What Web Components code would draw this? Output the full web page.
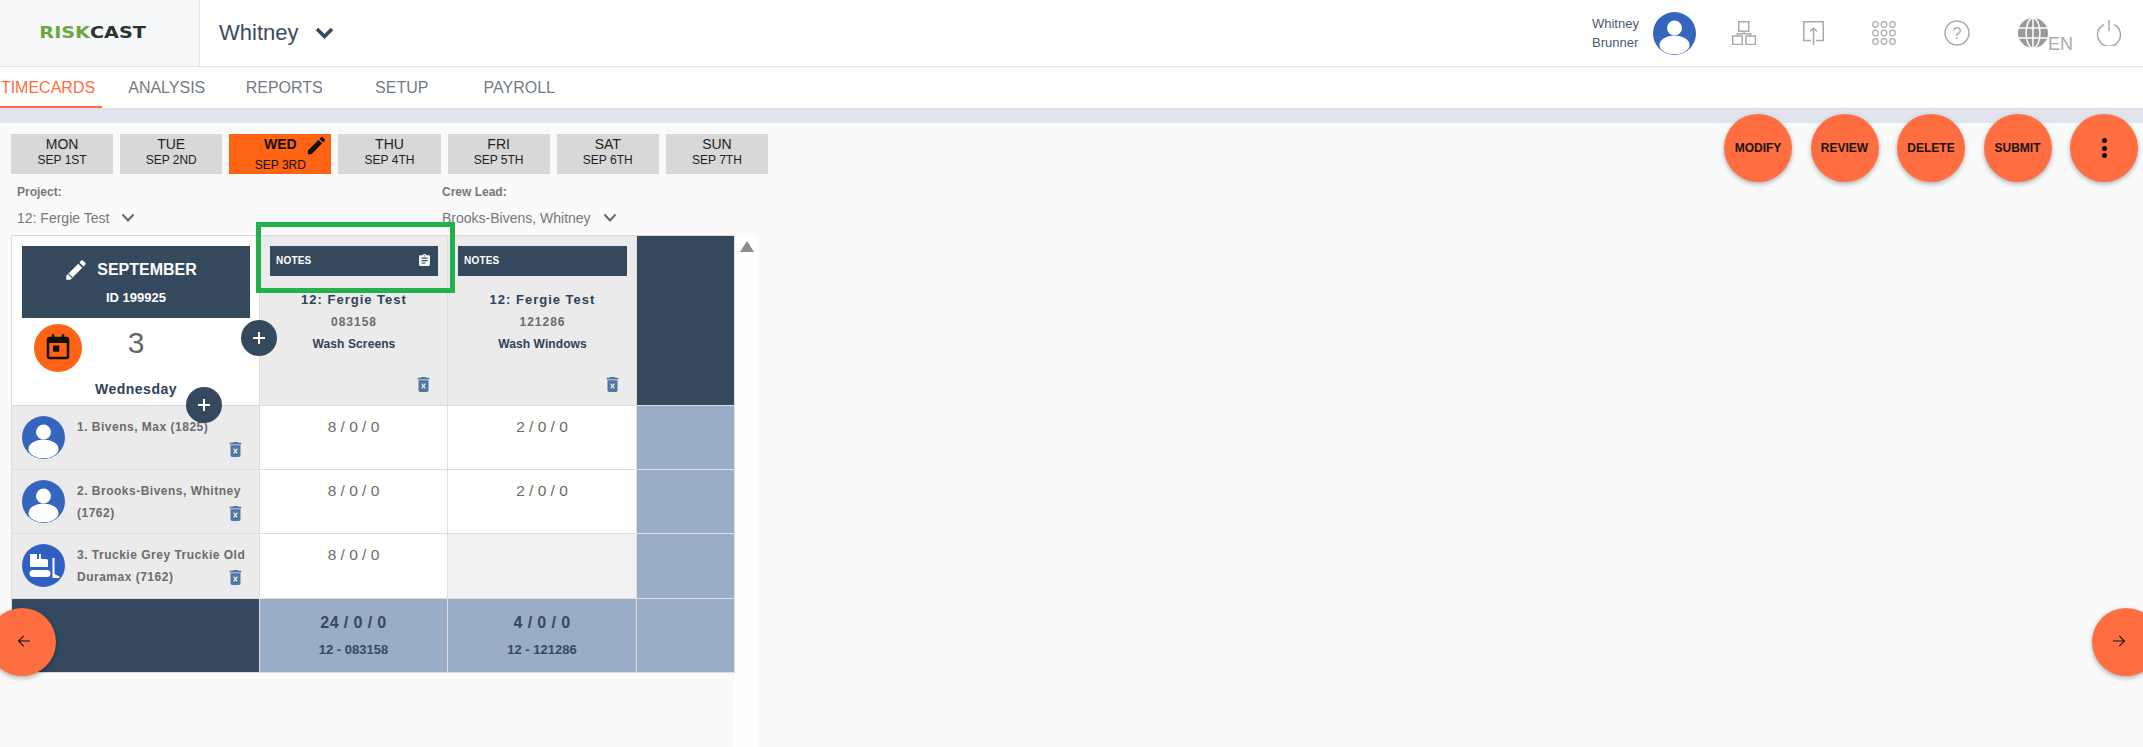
<!DOCTYPE html>
<html lang="en">
<head>
<meta charset="utf-8">
<title>Riskcast Timecards</title>
<style>
  html, body { margin: 0; height: 100%; }
  body {
    display: flex;
    flex-direction: column;
    height: 747px;
    overflow: hidden;
    background: #fafafa;
    font-family: "Liberation Sans", Arial, sans-serif;
  }
</style>
</head>
<body>
<rc-header name="Whitney"></rc-header>
<rc-tabs></rc-tabs>
<rc-main>
  <rc-days></rc-days>
  <rc-filters></rc-filters>
  <rc-timecard>
    <rc-corner></rc-corner>
    <rc-job project="12: Fergie Test" code="083158" task="Wash Screens" clip></rc-job>
    <rc-job project="12: Fergie Test" code="121286" task="Wash Windows"></rc-job>
    <rc-cell kind="dark"></rc-cell>

    <rc-person>1. Bivens, Max (1825)</rc-person>
    <rc-cell>8 / 0 / 0</rc-cell>
    <rc-cell>2 / 0 / 0</rc-cell>
    <rc-cell kind="blue"></rc-cell>

    <rc-person>2. Brooks-Bivens, Whitney (1762)</rc-person>
    <rc-cell>8 / 0 / 0</rc-cell>
    <rc-cell>2 / 0 / 0</rc-cell>
    <rc-cell kind="blue"></rc-cell>

    <rc-person truck>3. Truckie Grey Truckie Old Duramax (7162)</rc-person>
    <rc-cell>8 / 0 / 0</rc-cell>
    <rc-cell kind="empty"></rc-cell>
    <rc-cell kind="blue"></rc-cell>

    <rc-cell kind="dark"></rc-cell>
    <rc-total sub="12 - 083158">24 / 0 / 0</rc-total>
    <rc-total sub="12 - 121286">4 / 0 / 0</rc-total>
    <rc-cell kind="blue"></rc-cell>
  </rc-timecard>
</rc-main>

<script>
const TRASH = `<svg width="13" height="15" viewBox="5 3 14 18" fill="#4f77a3"><path d="M6 19c0 1.1.9 2 2 2h8c1.1 0 2-.9 2-2V7H6v12zm3.2-7.6l1-1L12 12.6l1.8-2.200 1 1L13 14l1.800 2.200-1 1L12 15.400l-1.800 1.800-1-1L11 14zM15.500 4l-1-1h-5l-1 1H5v2h14V4z"/></svg>`;
const CHEVRON = `<svg width="14" height="10" viewBox="0 0 14 10" fill="none" stroke="#666" stroke-width="2"><path d="M1.500 1.500 7 7.500l5.500-6"/></svg>`;
const PERSON = `<svg width="43" height="43" viewBox="0 0 43 43"><defs><clipPath id="c"><circle cx="21.500" cy="21.500" r="21"/></clipPath></defs><circle cx="21.500" cy="21.500" r="21.500" fill="#3565bd"/><circle cx="21.500" cy="16" r="7.500" fill="#fff"/><ellipse cx="21.500" cy="33" rx="15" ry="9.500" fill="#fff" clip-path="url(#c)"/></svg>`;
const PENCIL = `<path d="M3 17.250V21h3.750L17.810 9.940l-3.750-3.750L3 17.250zM20.710 7.040c.39-.39.39-1.020 0-1.410l-2.340-2.340c-.39-.39-1.020-.39-1.410 0l-1.830 1.830 3.750 3.750 1.830-1.830z"/>`;

class RcHeader extends HTMLElement {
  connectedCallback() {
    const name = this.getAttribute('name');
    this.attachShadow({ mode: 'open' }).innerHTML = `
      <style>
        :host { display: flex; align-items: stretch; height: 66px; background: #fff; border-bottom: 1px solid #e4e4e4; font-family: "Liberation Sans", sans-serif; flex: none; }
        .logo { width: 200px; background: #f7f8fa; border-right: 1px solid #e4e6ea; display: flex; align-items: center; justify-content: center; box-sizing: border-box; padding-right: 13px; }
        .logo span { font: bold 15px "DejaVu Sans", sans-serif; transform: scaleX(1.28); color: #28352c; }
        .logo b { color: #6aa83e; }
        .who { display: flex; align-items: center; gap: 17px; margin-left: 19px; font-size: 22px; color: #3a4b60; }
        .tools { margin-left: auto; display: flex; align-items: center; padding-right: 21px; }
        .user { width: 50px; font-size: 13px; line-height: 19px; color: #4a5a70; margin-right: 11px; }
        .tools svg { display: block; fill: none; stroke: #aaa; stroke-width: 1.500; }
        .av svg { stroke: none; fill: initial; }
        .en { font-size: 18px; color: #aaa; align-self: flex-end; margin-bottom: 13px; line-height: 18px; margin-right: 23px; }
      </style>
      <div class="logo"><span><b>RISK</b>CAST</span></div>
      <div class="who">${name}
        <svg width="19" height="12" viewBox="0 0 19 12" fill="none" stroke="#34495e" stroke-width="3.500"><path d="M2 2l7.500 7.500L17 2"/></svg>
      </div>
      <div class="tools">
        <div class="user">Whitney Brunner</div>
        <div class="av" style="margin-right:36px">${PERSON}</div>
        <svg style="margin-right:47px" width="24" height="24" viewBox="0 0 24 24"><rect x="6.750" y=".75" width="10" height="9.500"/><rect x=".75" y="15" width="9.500" height="8.500"/><rect x="14" y="15" width="9.500" height="8.500"/><path d="M12 10.500V12.800M5.500 15v-2.200h13V15"/></svg>
        <svg style="margin-right:48px" width="21" height="24" viewBox="0 0 21 24"><path d="M8 19.500H.75V.75h19.500V19.500H13M10.500 24V7M7 10.500 10.500 7 14 10.500"/></svg>
        <svg style="margin-right:48px;stroke-width:1.200" width="24" height="24" viewBox="0 0 24 24"><circle cx="3.500" cy="3.500" r="2.800"/><circle cx="12" cy="3.500" r="2.800"/><circle cx="20.500" cy="3.500" r="2.800"/><circle cx="3.500" cy="12" r="2.800"/><circle cx="12" cy="12" r="2.800"/><circle cx="20.500" cy="12" r="2.800"/><circle cx="3.500" cy="20.500" r="2.800"/><circle cx="12" cy="20.500" r="2.800"/><circle cx="20.500" cy="20.500" r="2.800"/></svg>
        <svg style="margin-right:48px" width="26" height="26" viewBox="0 0 26 26"><circle cx="13" cy="13" r="12"/><text x="13" y="18.500" text-anchor="middle" font-size="16" font-family="Liberation Sans" fill="#aaa" stroke="none">?</text></svg>
        <svg width="30" height="30" viewBox="0 0 30 30"><circle cx="15" cy="15" r="15" style="fill:#999;stroke:none"/><g style="stroke:#fff;stroke-width:1.500"><ellipse cx="15" cy="15" rx="7" ry="15"/><path d="M15 0v30M0 10h30M0 20h30"/></g></svg>
        <span class="en">EN</span>
        <svg width="26" height="26" viewBox="0 0 26 26"><path d="M8 4.500A11.500 11.500 0 1 0 18 4.500M13 0v11"/></svg>
      </div>`;
  }
}

class RcTabs extends HTMLElement {
  connectedCallback() {
    const names = ['ANALYSIS', 'REPORTS', 'SETUP', 'PAYROLL'];
    this.attachShadow({ mode: 'open' }).innerHTML = `
      <style>
        :host { display: flex; height: 41px; background: #fff; border-bottom: 1px solid #dcdcdc; font: 16px "Liberation Sans", sans-serif; color: #757b85; flex: none; }
        div { display: flex; align-items: center; justify-content: center; width: 117.500px; box-sizing: border-box; }
        .on { width: 102px; margin-right: 6px; padding-right: 6px; color: #ff6e40; border-bottom: 2px solid #ff6e40; padding-top: 2px; }
      </style>
      <div class="on">TIMECARDS</div>
      ${names.map(n => `<div>${n}</div>`).join('')}`;
  }
}

class RcMain extends HTMLElement {
  connectedCallback() {
    const fabs = ['MODIFY', 'REVIEW', 'DELETE', 'SUBMIT'];
    this.attachShadow({ mode: 'open' }).innerHTML = `
      <style>
        :host { display: flex; flex-direction: column; flex: 1; min-height: 0; position: relative; border-top: 14px solid #e1e4ec; padding: 11px 0 0 11px; }
        .actions { position: absolute; top: -9px; right: 5px; display: flex; gap: 18.500px; }
        .fab { width: 68px; height: 68px; border-radius: 50%; background: #ff6e40; box-shadow: 0 2px 5px rgba(0,0,0,.3); display: flex; align-items: center; justify-content: center; font: bold 12px "Liberation Sans", sans-serif; color: #1c1410; }
        .nav { position: absolute; top: 485px; }
        .dots { flex-direction: column; gap: 2.500px; }
        .dots i { width: 5px; height: 5px; background: #111; border-radius: 50%; }
        .back { left: -12px; }
        .next { right: -17px; }
        .back svg { margin-left: 4px; margin-bottom: 2px; }
        .next svg { margin-right: 14px; margin-bottom: 2px; }
      </style>
      <slot></slot>
      <div class="actions">
        ${fabs.map(f => `<div class="fab">${f}</div>`).join('')}
        <div class="fab dots"><i></i><i></i><i></i></div>
      </div>
      <div class="fab nav back"><svg width="18" height="18" viewBox="0 0 24 24" fill="#111"><path d="M20 11.300H6.500l5.600-5.600-1-1L3.800 12l7.300 7.300 1-1-5.600-5.600H20z"/></svg></div>
      <div class="fab nav next"><svg width="18" height="18" viewBox="0 0 24 24" fill="#111"><path d="M4 11.300h13.500l-5.600-5.600 1-1 7.300 7.300-7.300 7.300-1-1 5.600-5.600H4z"/></svg></div>`;
  }
}

class RcDays extends HTMLElement {
  connectedCallback() {
    const days = [['MON', 'SEP 1ST'], ['TUE', 'SEP 2ND'], ['WED', 'SEP 3RD'], ['THU', 'SEP 4TH'], ['FRI', 'SEP 5TH'], ['SAT', 'SEP 6TH'], ['SUN', 'SEP 7TH']];
    this.attachShadow({ mode: 'open' }).innerHTML = `
      <style>
        :host { display: grid; grid-template-columns: repeat(7, 1fr); gap: 7px; width: 757px; flex: none; font-family: "Liberation Sans", sans-serif; color: #222; }
        .day { height: 40px; background: #d8d8d8; display: flex; flex-direction: column; align-items: center; box-sizing: border-box; padding-top: 1px; position: relative; }
        .n { font-size: 14px; line-height: 18px; }
        .d { font-size: 12px; line-height: 14px; }
        .on { background: #ff6314; color: #111; }
        .on .n { font-weight: bold; }
        .on .d { margin-top: 5px; }
        .on svg { position: absolute; left: 76px; top: 0; }
      </style>
      ${days.map(([n, d]) => `<div class="day ${n === 'WED' ? 'on' : ''}"><span class="n">${n}</span><span class="d">${d}</span>${n === 'WED' ? `<svg width="23" height="23" viewBox="0 0 24 24" fill="#111">${PENCIL}</svg>` : ''}</div>`).join('')}`;
  }
}

class RcFilters extends HTMLElement {
  connectedCallback() {
    const item = (label, value) => `<div class="f"><label>${label}</label><div class="v">${value}${CHEVRON}</div></div>`;
    this.attachShadow({ mode: 'open' }).innerHTML = `
      <style>
        :host { display: flex; height: 61px; flex: none; padding-left: 6px; font-family: "Liberation Sans", sans-serif; color: #777; }
        .f { width: 425px; padding-top: 10px; box-sizing: border-box; }
        label { display: block; font-size: 12px; font-weight: bold; line-height: 16px; }
        .v { display: flex; align-items: center; gap: 12px; font-size: 14px; line-height: 18px; margin-top: 9px; }
      </style>
      ${item('Project:', '12: Fergie Test')}${item('Crew Lead:', 'Brooks-Bivens, Whitney')}`;
  }
}

class RcTimecard extends HTMLElement {
  connectedCallback() {
    const plus = `<svg width="14" height="14" viewBox="0 0 14 14" stroke="#fff" stroke-width="2"><path d="M7 1v12M1 7h12"/></svg>`;
    this.attachShadow({ mode: 'open' }).innerHTML = `
      <style>
        :host { display: flex; flex: 1; position: relative; min-height: 0; }
        .grid {
          display: grid;
          grid-template-columns: 247px 187px 188px 97px;
          grid-template-rows: 169px 63px 63px 64px 73px;
          gap: 1px;
          background: #ddd;
          border: 1px solid #ddd;
          align-self: flex-start;
        }
        .track { width: 23px; background: #fefefe; position: relative; }
        .track i { position: absolute; left: 5px; top: 6px; border: 7px solid transparent; border-top: 0; border-bottom: 11px solid #8c8c8c; }
        .plus { position: absolute; width: 36px; height: 36px; border-radius: 50%; background: #34495e; display: flex; align-items: center; justify-content: center; }
        .mark { position: absolute; left: 245px; top: -13px; width: 199px; height: 71px; box-sizing: border-box; border: 5px solid #22b14c; }
      </style>
      <div class="grid"><slot></slot></div>
      <div class="track"><i></i></div>
      <div class="plus" style="left:230px;top:85px">${plus}</div>
      <div class="plus" style="left:175px;top:152px">${plus}</div>
      <div class="mark"></div>`;
  }
}

class RcCorner extends HTMLElement {
  connectedCallback() {
    this.attachShadow({ mode: 'open' }).innerHTML = `
      <style>
        :host { display: block; background: #fff; padding: 10px 9px 0 10px; font-family: "Liberation Sans", sans-serif; }
        .bar { height: 72px; background: #34495e; color: #fff; display: flex; flex-direction: column; align-items: center; font-weight: bold; }
        .t { display: flex; align-items: center; gap: 8px; font-size: 16px; height: 24px; margin-top: 12px; margin-right: 12px; }
        .id { font-size: 13px; margin-top: 9px; line-height: 14px; }
        .row { display: grid; grid-template-columns: 48px 1fr 48px; align-items: center; padding: 6px 12px 0; }
        .cal { width: 48px; height: 48px; border-radius: 50%; background: #ff6314; display: flex; align-items: center; justify-content: center; }
        .num { text-align: center; font-size: 30px; color: #666; margin-top: -10px; }
        .wd { text-align: center; font-size: 14px; font-weight: bold; color: #2f4159; letter-spacing: .5px; margin-top: 9px; }
      </style>
      <div class="bar">
        <div class="t"><svg width="26" height="26" viewBox="0 0 24 24" fill="#fff">${PENCIL}<path d="M5 15.500l3.500 3.500" stroke="#34495e"/></svg>SEPTEMBER</div>
        <div class="id">ID 199925</div>
      </div>
      <div class="row">
        <div class="cal"><svg width="30" height="30" viewBox="0 0 24 24" fill="#111"><path d="M17 3V1h-2v2H9V1H7v2H5C3.900 3 3 3.900 3 5v14c0 1.100.9 2 2 2h14c1.100 0 2-.9 2-2V5c0-1.100-.9-2-2-2zM19 19H5V8h14zM8 10h5v5H8z"/></svg></div>
        <div class="num">3</div>
      </div>
      <div class="wd">Wednesday</div>`;
  }
}

class RcJob extends HTMLElement {
  connectedCallback() {
    const clip = this.hasAttribute('clip') ? `<svg width="11" height="12" viewBox="3 1 18 20" fill="#fff"><path d="M19 3h-4.180C14.400 1.840 13.300 1 12 1s-2.400.84-2.820 2H5c-1.100 0-2 .9-2 2v14c0 1.100.9 2 2 2h14c1.100 0 2-.9 2-2V5c0-1.100-.9-2-2-2zm-7 0c.55 0 1 .45 1 1s-.45 1-1 1-1-.45-1-1 .45-1 1-1zm2 14H7v-2h7v2zm3-4H7v-2h10v2zm0-4H7V7h10v2z"/></svg>` : '';
    this.attachShadow({ mode: 'open' }).innerHTML = `
      <style>
        :host { display: block; position: relative; background: #ebebeb; padding: 10px 9px 0 10px; text-align: center; font-family: "Liberation Sans", sans-serif; font-weight: bold; }
        .notes { height: 30px; background: #34495e; color: #fff; font-size: 10px; letter-spacing: .2px; display: flex; align-items: center; justify-content: space-between; padding: 0 8px 2px 6px; box-sizing: border-box; margin-bottom: 13px; }
        .p { font-size: 13px; letter-spacing: 1px; color: #2f4159; line-height: 22px; }
        .c { font-size: 12px; letter-spacing: 1px; color: #6b6b6b; line-height: 22px; }
        .t { font-size: 12px; letter-spacing: .1px; color: #2f4159; line-height: 22px; }
        .del { position: absolute; right: 17px; top: 141px; }
      </style>
      <div class="notes"><span>NOTES</span>${clip}</div>
      <div class="p">${this.getAttribute('project')}</div>
      <div class="c">${this.getAttribute('code')}</div>
      <div class="t">${this.getAttribute('task')}</div>
      <div class="del">${TRASH}</div>`;
  }
}

class RcPerson extends HTMLElement {
  connectedCallback() {
    const truck = `<svg width="43" height="43" viewBox="0 0 43 43"><circle cx="21.500" cy="21.500" r="21.500" fill="#3060c4"/><g fill="#fff"><path d="M8 10h7v5h2V10h2v5h5a2 2 0 0 1 2 2v6H8z"/><rect x="7.500" y="26" width="21" height="7" rx="3.500"/><path d="M30.500 14h2v16l5 2.500V34h-7z"/></g></svg>`;
    this.attachShadow({ mode: 'open' }).innerHTML = `
      <style>
        :host { display: flex; position: relative; background: #ebebeb; padding: 10px 12px 0 10px; gap: 12px; font: bold 12px/22px "Liberation Sans", sans-serif; letter-spacing: .5px; color: #6b6b6b; }
        .a { flex: none; width: 43px; height: 43px; }
        .n { flex: 1; min-width: 0; }
        .del { position: absolute; right: 17px; top: 36px; }
      </style>
      <div class="a">${this.hasAttribute('truck') ? truck : PERSON}</div>
      <div class="n"><slot></slot></div>
      <div class="del">${TRASH}</div>`;
  }
}

class RcCell extends HTMLElement {
  connectedCallback() {
    const bg = { dark: '#34495e', blue: '#98adc6', empty: '#f1f1f1' }[this.getAttribute('kind')] || '#fff';
    this.attachShadow({ mode: 'open' }).innerHTML = `
      <style>
        :host { display: block; background: ${bg}; text-align: center; font: 15.500px/20px "Liberation Sans", sans-serif; color: #6f6a62; padding-top: 11px; box-sizing: border-box; }
      </style>
      <slot></slot>`;
  }
}

class RcTotal extends HTMLElement {
  connectedCallback() {
    this.attachShadow({ mode: 'open' }).innerHTML = `
      <style>
        :host { display: block; background: #98adc6; text-align: center; font-family: "Liberation Sans", sans-serif; font-weight: bold; color: #344a60; padding-top: 14px; }
        .a { font-size: 16px; line-height: 20px; letter-spacing: .4px; }
        .b { font-size: 13px; line-height: 16px; margin-top: 9px; }
      </style>
      <div class="a"><slot></slot></div>
      <div class="b">${this.getAttribute('sub')}</div>`;
  }
}

customElements.define('rc-header', RcHeader);
customElements.define('rc-tabs', RcTabs);
customElements.define('rc-main', RcMain);
customElements.define('rc-days', RcDays);
customElements.define('rc-filters', RcFilters);
customElements.define('rc-timecard', RcTimecard);
customElements.define('rc-corner', RcCorner);
customElements.define('rc-job', RcJob);
customElements.define('rc-person', RcPerson);
customElements.define('rc-cell', RcCell);
customElements.define('rc-total', RcTotal);
</script>
</body>
</html>
